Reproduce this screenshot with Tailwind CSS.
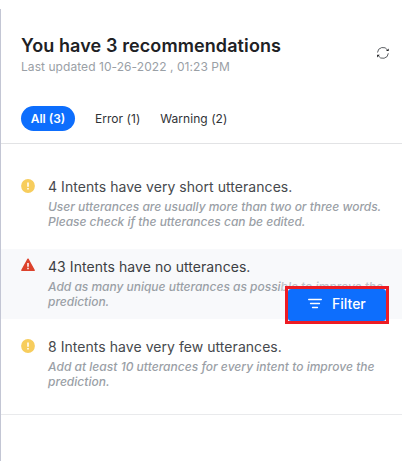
<!DOCTYPE html>
<html lang="en">
<head>
<meta charset="utf-8">
<title>Recommendations</title>
<script src="https://cdn.jsdelivr.net/npm/@tailwindcss/browser@4"></script>
</head>
<body class="bg-white font-['Inter',sans-serif] w-[402px] h-[461px] overflow-hidden pt-[9px]">
<main class="relative h-[452px] border-l border-[#c3c6d4] flex flex-col whitespace-nowrap">
  <header class="h-[97px] shrink-0 pl-5 pr-[12px] pt-[25px] flex justify-between">
    <div>
      <h1 class="text-[18px] leading-6 font-semibold tracking-[0.1px] text-[#202124]">You have 3 recommendations</h1>
      <p class="text-[12px] leading-[18px] tracking-[0.06px] text-[#9aa0a6]">Last updated 10-26-2022 , 01:23 PM</p>
    </div>
    <svg class="mt-[12px]" width="14" height="14" viewBox="0 0 14 14" fill="none" stroke="#4a4d51" stroke-width="0.9">
      <path d="M1.5 6.5A5.4 5.4 0 0 1 11.6 4.2M12.3 7.3A5.4 5.4 0 0 1 2.2 9.6"/>
      <path d="M12.7 2.4V5.1H10ZM1.1 11.4V8.7H3.8Z" fill="#202124" stroke="none"/>
    </svg>
  </header>
  <nav class="h-[38px] shrink-0 pl-5 flex items-start border-b border-[#e2e3e5] text-[12px] leading-[25px] text-[#303236]">
    <span class="w-[54px] h-[25px] rounded-full bg-[#0d6efd] text-white font-semibold text-center">All (3)</span>
    <span class="ml-5 tracking-[0.04px]">Error (1)</span>
    <span class="ml-5 tracking-[0.04px]">Warning (2)</span>
  </nav>
  <ul class="pt-[25px] h-[271px] shrink-0 border-b border-[#e9eaec] flex flex-col gap-[10px]">
    <li class="h-[70px] flex pl-5 pt-[8px]">
      <svg class="w-[14px] h-[14px] mt-[2px] mr-[13px] shrink-0" viewBox="0 0 14 14"><circle cx="7" cy="7" r="6.9" fill="#f7cd5d"/><path d="M7 3.6V7.7M7 9.1V10.5" stroke="#fff" stroke-width="1.6"/></svg>
      <div><h2 class="text-[14px] leading-5 tracking-[0.05px] text-[#46494d]">4 Intents have very short utterances.</h2>
      <p class="mt-[2px] text-[12px] leading-[15px] tracking-[-0.02px] italic font-medium text-[#9aa0a6]">User utterances are usually more than two or three words.<br>Please check if the utterances can be edited.</p></div>
    </li>
    <li class="h-[70px] flex pl-5 pt-[8px] bg-[#f8f9fb]">
      <svg class="w-[14px] h-[14px] mt-[1px] mr-[13px] shrink-0" viewBox="0 0 14 14"><path d="M7 1.2L13.2 12.3H.8Z" fill="#dc422c" stroke="#dc422c" stroke-width="1.4" stroke-linejoin="round"/><path d="M7 5V8.8M7 9.8V11.2" stroke="#fff" stroke-width="1.5"/></svg>
      <div><h2 class="text-[14px] leading-5 tracking-[0.06px] text-[#3c4043]">43 Intents have no utterances.</h2>
      <p class="mt-[2px] text-[12px] leading-[15px] tracking-[-0.02px] italic font-medium text-[#9aa0a6]">Add as many unique utterances as possi<span class="text-[#bfc3c8]">ble to improve the</span><br>prediction.</p></div>
    </li>
    <li class="h-[70px] flex pl-5 pt-[8px]">
      <svg class="w-[14px] h-[14px] mt-[2px] mr-[13px] shrink-0" viewBox="0 0 14 14"><circle cx="7" cy="7" r="6.9" fill="#f7cd5d"/><path d="M7 3.6V7.7M7 9.1V10.5" stroke="#fff" stroke-width="1.6"/></svg>
      <div><h2 class="text-[14px] leading-5 tracking-[0.05px] text-[#46494d]">8 Intents have very few utterances.</h2>
      <p class="mt-[2px] text-[12px] leading-[15px] tracking-[0.02px] italic font-medium text-[#9aa0a6]">Add at least 10 utterances for every intent to improve the<br>prediction.</p></div>
    </li>
  </ul>
  <div class="absolute left-[284px] top-[277px] w-[104px] h-[38px] border-[3px] border-[#ed1c24] bg-white">
    <button class="w-full h-full rounded-[3px] bg-[#0d6efd] text-white text-[14px] font-medium flex items-center pl-[20px] pb-[3px] gap-[10px]">
      <svg width="14" height="12" viewBox="0 0 14 12" stroke="#fff" stroke-width="1.3" stroke-linecap="round"><path d="M.7 1.5H13.3M2.5 5.5H11.5M4.5 9.5H9.5"/></svg>
      <span>Filter</span>
    </button>
  </div>
</main>
</body>
</html>
